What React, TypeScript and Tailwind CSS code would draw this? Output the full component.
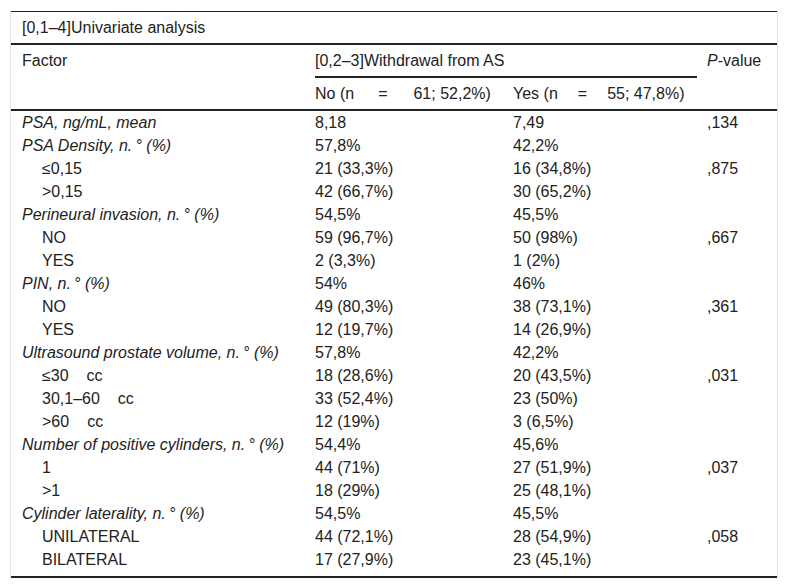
type Row = { label: string; italic?: boolean; sub?: boolean; no: string; yes: string; p?: string };

const rows: Row[] = [
    { label: "PSA, ng/mL, mean", italic: true, no: "8,18", yes: "7,49", p: ",134" },
    { label: "PSA Density, n.\u2009° (%)", italic: true, no: "57,8%", yes: "42,2%" },
    { label: "≤0,15", sub: true, no: "21 (33,3%)", yes: "16 (34,8%)", p: ",875" },
    { label: ">0,15", sub: true, no: "42 (66,7%)", yes: "30 (65,2%)" },
    { label: "Perineural invasion, n.\u2009° (%)", italic: true, no: "54,5%", yes: "45,5%" },
    { label: "NO", sub: true, no: "59 (96,7%)", yes: "50 (98%)", p: ",667" },
    { label: "YES", sub: true, no: "2 (3,3%)", yes: "1 (2%)" },
    { label: "PIN, n.\u2009° (%)", italic: true, no: "54%", yes: "46%" },
    { label: "NO", sub: true, no: "49 (80,3%)", yes: "38 (73,1%)", p: ",361" },
    { label: "YES", sub: true, no: "12 (19,7%)", yes: "14 (26,9%)" },
    { label: "Ultrasound prostate volume, n.\u2009° (%)", italic: true, no: "57,8%", yes: "42,2%" },
    { label: "≤30|cc", sub: true, no: "18 (28,6%)", yes: "20 (43,5%)", p: ",031" },
    { label: "30,1–60|cc", sub: true, no: "33 (52,4%)", yes: "23 (50%)" },
    { label: ">60|cc", sub: true, no: "12 (19%)", yes: "3 (6,5%)" },
    { label: "Number of positive cylinders, n.\u2009° (%)", italic: true, no: "54,4%", yes: "45,6%" },
    { label: "1", sub: true, no: "44 (71%)", yes: "27 (51,9%)", p: ",037" },
    { label: ">1", sub: true, no: "18 (29%)", yes: "25 (48,1%)" },
    { label: "Cylinder laterality, n.\u2009° (%)", italic: true, no: "54,5%", yes: "45,5%" },
    { label: "UNILATERAL", sub: true, no: "44 (72,1%)", yes: "28 (54,9%)", p: ",058" },
    { label: "BILATERAL", sub: true, no: "17 (27,9%)", yes: "23 (45,1%)" },
];

function Label({ text }: { text: string }) {
    // unit gaps like "≤30   cc" are wider than a normal space
    const [a, b] = text.split("|");
    if (b === undefined) return <>{a}</>;
    return (
        <>
            {a}
            <span className="inline-block w-[18px]" />
            {b}
        </>
    );
}

export default function App() {
    return (
        <div
            className="min-h-screen bg-white pt-[11px] pl-[10px] text-[16px] leading-[20px] text-[#222]"
            style={{ fontFamily: '"Liberation Sans", Arial, sans-serif' }}
        >
            <div className="w-[768px] border-x border-[#e4e4e4]">
                <div className="border-t border-[#222]">
                    <div className="h-[31px] pl-[11px] pt-[6px]">[0,1–4]Univariate analysis</div>
                </div>

                <div className="flex border-t-2 border-[#222]">
                    <div className="w-[304px] pl-[11px] pt-[6px]">Factor</div>
                    <div className="w-[392px]">
                        <div className="mr-[10px] h-[33px] border-b-2 border-[#222] pt-[6px]">[0,2–3]Withdrawal from AS</div>
                        <div className="flex h-[31px] pt-[6px]">
                            <div className="w-[198px]">
                                No (n<span className="inline-block w-[24px]" />=<span className="inline-block w-[26px]" />61; 52,2%)
                            </div>
                            <div>
                                Yes (n<span className="inline-block w-[20px]" />=<span className="inline-block w-[20px]" />55; 47,8%)
                            </div>
                        </div>
                    </div>
                    <div className="pt-[6px]">
                        <i>P</i>-value
                    </div>
                </div>

                <div className="border-y-2 border-[#222] pb-[5px]">
                    {rows.map((r, i) => (
                        <div key={i} className="flex h-[23px] items-center">
                            <div className={`w-[304px] ${r.sub ? "pl-[31px]" : "pl-[11px]"} ${r.italic ? "italic" : ""}`}>
                                <Label text={r.label} />
                            </div>
                            <div className="w-[198px]">{r.no}</div>
                            <div className="w-[194px]">{r.yes}</div>
                            <div>{r.p}</div>
                        </div>
                    ))}
                </div>
            </div>
        </div>
    );
}
